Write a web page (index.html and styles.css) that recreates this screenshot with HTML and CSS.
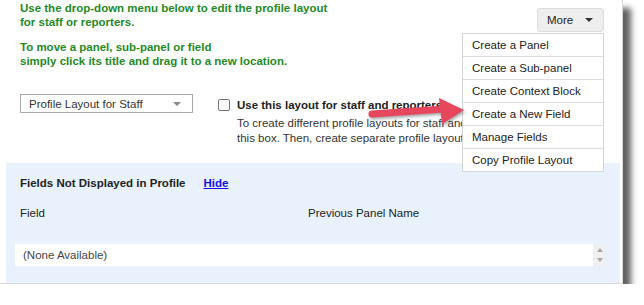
FILE: index.html
```html
<!DOCTYPE html>
<html>
<head>
<meta charset="utf-8">
<link rel="stylesheet" href="styles.css">
</head>
<body>
<div class="frame">
  <div class="top">
    <div class="left">
      <div class="intro">
        <p>Use the drop-down menu below to edit the profile layout<br>for staff or reporters.</p>
        <p class="p2">To move a panel, sub-panel or field<br>simply click its title and drag it to a new location.</p>
      </div>
      <div class="controls">
        <div class="select"><span>Profile Layout for Staff</span><span class="sel-caret"></span></div>
        <div class="option">
          <span class="check"></span>
          <span class="opt-label">Use this layout for staff and reporters</span>
          <span class="opt-desc">To create different profile layouts for staff and reporters, check<br>this box. Then, create separate profile layouts.</span>
        </div>
      </div>
    </div>
    <div class="right">
      <div class="more-wrap">
        <div class="more-btn"><span>More</span><span class="caret"></span></div>
        <ul class="menu">
          <li>Create a Panel</li>
          <li>Create a Sub-panel</li>
          <li>Create Context Block</li>
          <li>Create a New Field</li>
          <li>Manage Fields</li>
          <li>Copy Profile Layout</li>
        </ul>
      </div>
    </div>
  </div>
  <div class="panel">
    <div class="panel-head"><span class="panel-title">Fields Not Displayed in Profile</span><a class="hide" href="#">Hide</a></div>
    <div class="cols"><span>Field</span><span>Previous Panel Name</span></div>
    <div class="listbox">
      <div class="list-item">(None Available)</div>
      <div class="scroll"><span class="up"></span><span class="down"></span></div>
    </div>
  </div>
  <svg class="arrow" width="120" height="40" viewBox="0 0 120 40">
    <line x1="10" y1="22" x2="82" y2="17" stroke="#e6475d" stroke-width="7" stroke-linecap="round"/>
    <polygon points="77,6 102,18 80,32" fill="#e6475d"/>
  </svg>
</div>
</body>
</html>
```

FILE: styles.css
```css
html, body {
  margin: 0;
  padding: 0;
  background: #fff;
}
body {
  font-family: "Liberation Sans", Arial, sans-serif;
  font-size: 11.5px;
  color: #222;
}
.frame {
  position: relative;
  width: 623px;
  height: 284px;
  box-sizing: border-box;
  background: #fff;
  border-right: 1px solid #d8d8d8;
  border-bottom: 1px solid #d8d8d8;
  box-shadow: 8px 8px 6px rgba(0, 0, 0, 0.62);
  display: flex;
  flex-direction: column;
}
.top {
  height: 163px;
  display: flex;
  justify-content: space-between;
  padding: 0 18px 0 20px;
  flex: none;
}
.left {
  flex: 1;
  min-width: 0;
}
.intro {
  padding-top: 1px;
  color: #1f8a26;
  font-weight: bold;
  line-height: 14px;
}
.intro p {
  margin: 0;
}
.intro .p2 {
  margin-top: 11px;
}
.controls {
  display: flex;
  align-items: flex-start;
  margin-top: 26px;
  gap: 25px;
}
.select {
  width: 173px;
  height: 19px;
  box-sizing: border-box;
  border: 1px solid #a9a9a9;
  display: flex;
  align-items: center;
  justify-content: space-between;
  padding: 0 11px 0 8px;
  color: #333;
  flex: none;
}
.sel-caret {
  width: 0;
  height: 0;
  border-left: 4px solid transparent;
  border-right: 4px solid transparent;
  border-top: 4px solid #888;
}
.option {
  display: grid;
  grid-template-columns: 12px auto;
  column-gap: 7px;
  margin-top: 4px;
  white-space: nowrap;
}
.check {
  grid-row: 1;
  width: 12px;
  height: 12px;
  box-sizing: border-box;
  border: 1px solid #767676;
  border-radius: 2px;
  margin-top: 1px;
  background: #fff;
}
.opt-label {
  grid-column: 2;
  grid-row: 1;
  font-weight: bold;
  line-height: 14px;
}
.opt-desc {
  grid-column: 2;
  grid-row: 2;
  margin-top: 4px;
  line-height: 14.5px;
  color: #333;
}
.right {
  flex: none;
  padding-top: 8px;
}
.more-wrap {
  position: relative;
}
.more-btn {
  width: 67px;
  height: 24px;
  box-sizing: border-box;
  background: #eeeeee;
  border: 1px solid #dcdcdc;
  border-radius: 3px;
  display: flex;
  align-items: center;
  padding-left: 9px;
  gap: 12px;
  color: #222;
}
.caret {
  width: 0;
  height: 0;
  border-left: 4px solid transparent;
  border-right: 4px solid transparent;
  border-top: 4px solid #333;
}
.menu {
  position: absolute;
  z-index: 2;
  top: 25px;
  right: 0;
  width: 142px;
  margin: 0;
  padding: 0;
  list-style: none;
  background: #fff;
  border: 1px solid #d4d4d4;
  box-sizing: border-box;
}
.menu li {
  height: 23px;
  line-height: 22px;
  padding-left: 9px;
  border-top: 1px solid #dcdcdc;
  box-sizing: border-box;
  color: #222;
  white-space: nowrap;
}
.menu li:first-child {
  border-top: none;
  height: 22px;
}
.panel {
  flex: 1;
  margin: 0 2px 0 6px;
  background: #e9f2fc;
  padding: 13px 14px 0 9px;
}
.panel-head {
  display: flex;
  gap: 18px;
  margin-left: 5px;
  line-height: 14px;
}
.panel-title {
  font-weight: bold;
  color: #222;
}
.hide {
  color: #1010ee;
  font-weight: bold;
  text-decoration: underline;
}
.cols {
  display: grid;
  grid-template-columns: 288px auto;
  margin-left: 5px;
  margin-top: 16px;
  line-height: 14px;
  color: #222;
}
.listbox {
  display: flex;
  height: 22px;
  margin-top: 24px;
}
.list-item {
  flex: 1;
  background: #fff;
  padding-left: 8px;
  line-height: 22px;
  color: #444;
}
.scroll {
  width: 13px;
  background: #f0f0f0;
  display: flex;
  flex-direction: column;
  align-items: center;
  justify-content: space-between;
  padding: 4px 0;
  box-sizing: border-box;
}
.up {
  width: 0;
  height: 0;
  border-left: 3px solid transparent;
  border-right: 3px solid transparent;
  border-bottom: 4px solid #a8a8a8;
}
.down {
  width: 0;
  height: 0;
  border-left: 3px solid transparent;
  border-right: 3px solid transparent;
  border-top: 4px solid #a8a8a8;
}
.arrow {
  position: absolute;
  left: 362px;
  top: 92px;
  z-index: 3;
  filter: drop-shadow(1px 2px 1.5px rgba(0, 0, 0, 0.35));
}
```
